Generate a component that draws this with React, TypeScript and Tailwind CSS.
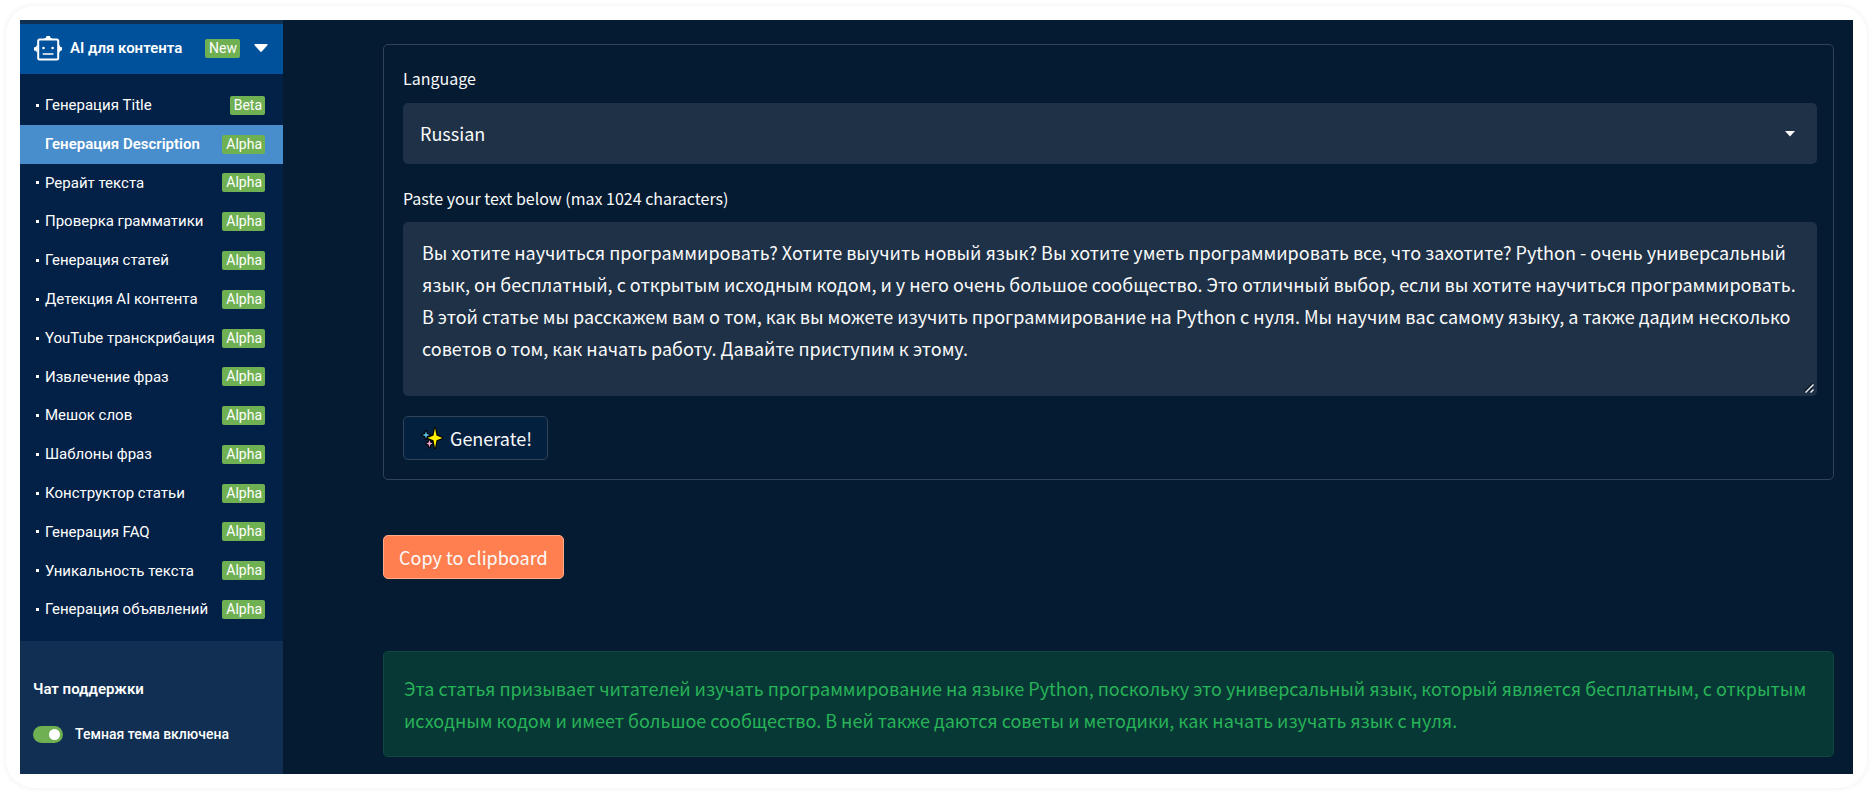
import { useState } from "react";

type Tool = { name: string; tag: string };

const tools: Tool[] = [
  { name: "Генерация Title", tag: "Beta" },
  { name: "Генерация Description", tag: "Alpha" },
  { name: "Рерайт текста", tag: "Alpha" },
  { name: "Проверка грамматики", tag: "Alpha" },
  { name: "Генерация статей", tag: "Alpha" },
  { name: "Детекция AI контента", tag: "Alpha" },
  { name: "YouTube транскрибация", tag: "Alpha" },
  { name: "Извлечение фраз", tag: "Alpha" },
  { name: "Мешок слов", tag: "Alpha" },
  { name: "Шаблоны фраз", tag: "Alpha" },
  { name: "Конструктор статьи", tag: "Alpha" },
  { name: "Генерация FAQ", tag: "Alpha" },
  { name: "Уникальность текста", tag: "Alpha" },
  { name: "Генерация объявлений", tag: "Alpha" },
];

const articleText =
  "Вы хотите научиться программировать? Хотите выучить новый язык? Вы хотите уметь программировать все, что захотите? Python - очень универсальный язык, он бесплатный, с открытым исходным кодом, и у него очень большое сообщество. Это отличный выбор, если вы хотите научиться программировать. В этой статье мы расскажем вам о том, как вы можете изучить программирование на Python с нуля. Мы научим вас самому языку, а также дадим несколько советов о том, как начать работу. Давайте приступим к этому.";

function Badge({ children }: { children: string }) {
  return (
    <span className="rounded-xs bg-[#6fb052] pr-[3px] pl-1 text-sm leading-[19px] text-white">
      {children}
    </span>
  );
}

function RobotIcon() {
  return (
    <svg viewBox="0 0 28 25" className="h-[25px] w-7 shrink-0" fill="none" aria-hidden="true">
      <rect x="4.2" y="3.5" width="20" height="20" rx="1.5" stroke="#fff" strokeWidth="2" />
      <path d="M10.2 3c.6-1.200 1.600-1 2-1.800a2 2 0 0 1 4 0c.4.8 1.400.6 2 1.800z" fill="#fff" />
      <path
        d="M3.4 8.8v8c-.8-.2-.8-1.6-1.8-2a1.900 1.900 0 0 1 0-3.900c1-.4 1-1.900 1.800-2.100zM25 8.800v8c.8-.2.8-1.600 1.600-2a1.900 1.900 0 0 0 0-3.900c-.8-.4-.8-1.900-1.600-2.100z"
        fill="#fff"
      />
      <circle cx="9.5" cy="12" r="1.3" fill="#fff" />
      <circle cx="18.6" cy="12" r="1.3" fill="#fff" />
      <path d="M9.3 18h9.6" stroke="#fff" strokeWidth="1.6" strokeLinecap="round" />
    </svg>
  );
}

function Sparkles() {
  return (
    <svg viewBox="0 0 22 22" className="size-[22px] shrink-0" aria-hidden="true">
      <g stroke="#000" strokeWidth="2.2" strokeLinejoin="round" paintOrder="stroke">
        <path d="M14 1l1.5 7.6L21.4 11l-5.9 2.3L14 21l-1.5-7.7L6.6 11l5.9-2.4z" fill="#fff100" />
        <path d="M5 4l.9 2.9L9 8l-3.1 1.1L5 12l-.9-2.9L1 8l3.1-1.1z" fill="#55c3e8" />
        <path d="M8.5 13l.9 2.6 2.4 1-2.4 1-.9 2.8-.9-2.8-2.4-1 2.4-1z" fill="#f0a8d0" />
      </g>
    </svg>
  );
}

function Sidebar() {
  const [active, setActive] = useState(1);
  const [dark, setDark] = useState(true);
  return (
    <aside className="flex w-[263px] shrink-0 flex-col bg-[#032147] font-['Roboto',sans-serif] text-[15px] text-white">
      <div className="h-1 bg-[#0f3052]" />
      <button
        type="button"
        className="flex h-[50px] items-center bg-[#00519b] pr-[15px] pb-0.5 pl-3.5 font-semibold"
      >
        <RobotIcon />
        <span className="ml-2">AI для контента</span>
        <span className="ml-auto flex font-normal">
          <Badge>New</Badge>
        </span>
        <svg viewBox="0 0 14 8" className="ml-[14px] h-2 w-3.5" aria-hidden="true">
          <path d="M1.2 0h11.6q1.4.2.4 1.4L8 7.3q-1 1-2 0L.8 1.4Q-.2.2 1.2 0z" fill="#fff" />
        </svg>
      </button>
      <nav className="flex flex-1 flex-col py-3">
        {tools.map((tool, i) => (
          <a
            key={tool.name}
            href="#"
            onClick={(e) => {
              e.preventDefault();
              setActive(i);
            }}
            className={
              i === active
                ? "flex flex-1 items-center bg-[#488dcc] pr-[18px] pl-4 font-semibold"
                : "flex flex-1 items-center pr-[18px] pl-4"
            }
          >
            <span className={i === active ? "size-[3px] opacity-0" : "size-[3px] bg-white"} />
            <span className="ml-1.5 whitespace-nowrap">{tool.name}</span>
            <span className="ml-auto flex font-normal">
              <Badge>{tool.tag}</Badge>
            </span>
          </a>
        ))}
      </nav>
      <div className="flex h-[133px] flex-col gap-[25px] bg-[#102f52] px-[13px] pt-[38px] font-semibold">
        <a href="#" className="leading-5">
          Чат поддержки
        </a>
        <label className="flex items-center text-sm leading-5 font-medium">
          <input
            type="checkbox"
            checked={dark}
            onChange={(e) => setDark(e.target.checked)}
            className="peer sr-only"
          />
          <span className="flex h-[17px] w-[30px] items-center justify-start rounded-full bg-slate-500 px-[3px] peer-checked:justify-end peer-checked:bg-[#6fb052]">
            <span className="size-[11px] rounded-full bg-white" />
          </span>
          <span className="ml-3">Темная тема включена</span>
        </label>
      </div>
    </aside>
  );
}

function Workspace() {
  const [text, setText] = useState(articleText);
  return (
    <main className="flex min-w-0 flex-1 flex-col items-start bg-[#041b32] pt-6 pr-[19px] pb-[17px] pl-[100px] font-['Noto_Sans_CJK_SC','Noto_Sans',sans-serif] text-lg text-[#fafafa]">
      <form
        onSubmit={(e) => e.preventDefault()}
        className="flex w-full flex-col items-start rounded-[5px] border border-[#2f445a] pt-[21px] pr-4 pb-[19px] pl-[19px]"
      >
        <label htmlFor="language" className="text-base leading-6">
          Language
        </label>
        <div className="relative mt-[13px] w-full">
          <select
            id="language"
            className="block h-[61px] w-full appearance-none rounded-[5px] bg-[#1e3147] px-[17px] pb-0.5 outline-none"
          >
            <option>Russian</option>
          </select>
          <svg
            viewBox="0 0 10 6"
            className="pointer-events-none absolute top-[28px] right-[22px] h-1.5 w-2.5"
            aria-hidden="true"
          >
            <path d="M0 0h10L5 5.5z" fill="#fafafa" />
          </svg>
        </div>
        <label htmlFor="source" className="mt-[22px] text-base leading-6">
          Paste your text below (max 1024 characters)
        </label>
        <div className="relative mt-3 w-full">
          <textarea
            id="source"
            maxLength={1024}
            value={text}
            onChange={(e) => setText(e.target.value)}
            className="block h-[174px] w-full resize-y rounded-[5px] bg-[#1e3147] pt-3.5 pr-3 pb-4 pl-[19px] leading-8 outline-none [&::-webkit-resizer]:bg-transparent"
          />
          <svg
            viewBox="0 0 10 10"
            className="pointer-events-none absolute right-[3px] bottom-[3px] size-2.5"
            aria-hidden="true"
          >
            <path d="M.5 8.500L8.500.5M4.500 8.500l4-4" stroke="#0b1622" strokeWidth="1.500" />
            <path d="M1.500 9.500l8-8M6.500 9.500l3-3" stroke="#e6eaee" strokeWidth="1.500" />
          </svg>
        </div>
        <button
          type="submit"
          className="mt-5 flex h-11 items-center rounded-[5px] border border-[#2f445a] bg-[#03203f] pr-[15px] pl-[17px]"
        >
          <Sparkles />
          <span className="ml-[7px]">Generate!</span>
        </button>
      </form>
      <button
        type="button"
        className="mt-[55px] h-11 rounded-[5px] border border-[#ffab8c] bg-[#ff7f50] px-[15px]"
      >
        Copy to clipboard
      </button>
      <p className="mt-[72px] w-full rounded-[5px] border border-[#0e4840] bg-[#073835] px-5 py-5 leading-8 text-[#27b358]">
        Эта статья призывает читателей изучать программирование на языке Python, поскольку это
        универсальный язык, который является бесплатным, с открытым исходным кодом и имеет большое
        сообщество. В ней также даются советы и методики, как начать изучать язык с нуля.
      </p>
    </main>
  );
}

export default function App() {
  return (
    <div className="bg-white p-1.5">
      <div className="rounded-[28px] bg-white p-3.5 shadow-[0_0_6px_rgba(0,0,0,0.07)]">
        <div className="flex">
          <Sidebar />
          <Workspace />
        </div>
      </div>
    </div>
  );
}
